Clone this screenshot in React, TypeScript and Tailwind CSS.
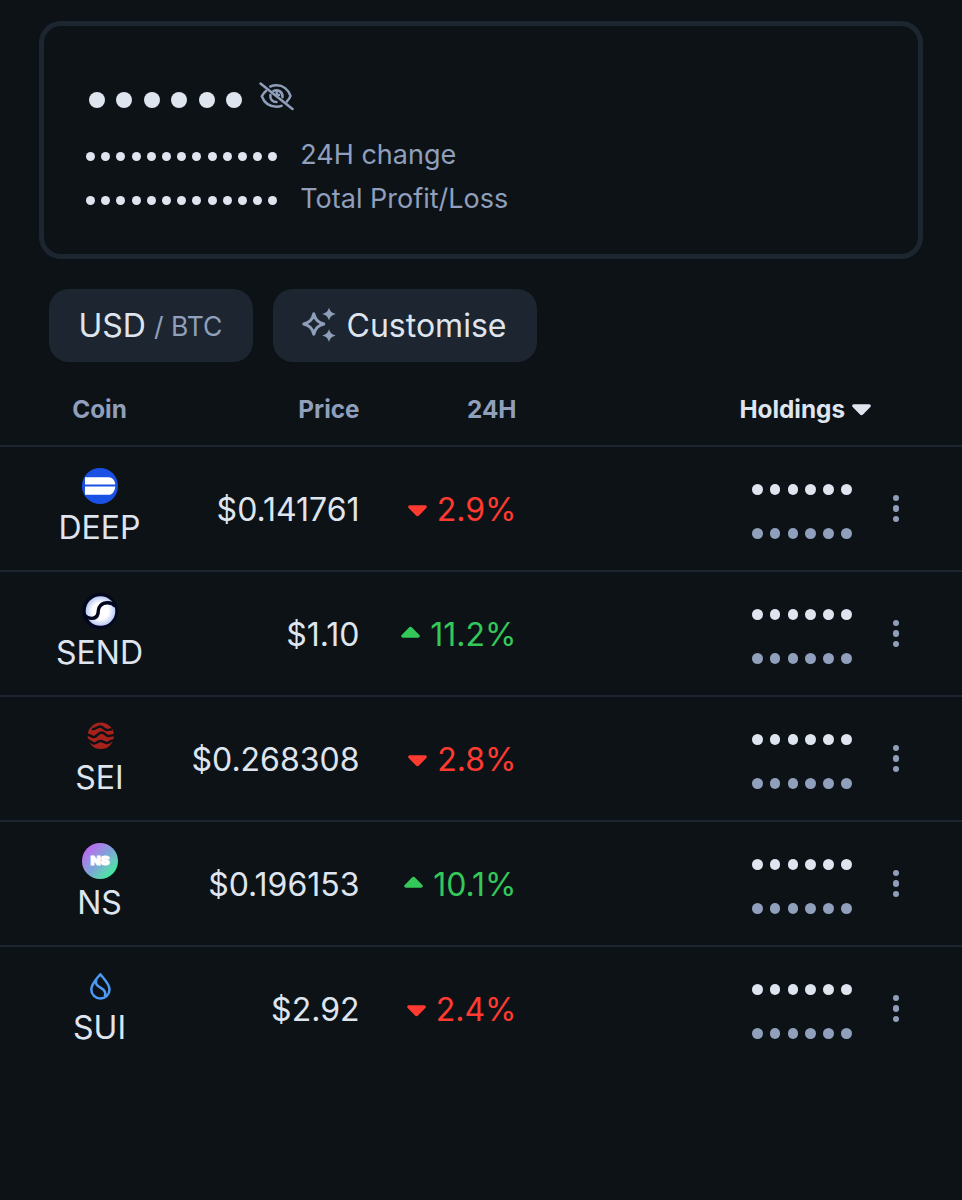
import type { ReactNode } from 'react';
import clsx from 'clsx';

interface Coin {
  symbol: string;
  price: string;
  change: number;
  icon: ReactNode;
}

function DeepIcon() {
  return (
    <svg className="w-9 h-9" viewBox="0 0 36 36">
      <circle cx="18" cy="18" r="18" fill="#1a50e4" />
      <path d="M3 9.3h23.500c4 0 6.200 3 6.800 7.300H3z" fill="#fff" />
      <path d="M3 18.500h30.300c-.6 4.900-2.800 8.300-6.800 8.300H3z" fill="#fff" />
    </svg>
  );
}

function SendIcon() {
  return (
    <svg className="w-9 h-9" viewBox="0 0 36 36">
      <defs>
        <radialGradient id="send-fill" cx="50%" cy="50%" r="55%">
          <stop offset="0.5" stopColor="#ffffff" />
          <stop offset="1" stopColor="#a9bcf5" />
        </radialGradient>
      </defs>
      <circle cx="18" cy="18" r="18" fill="#02071d" />
      <circle cx="18.500" cy="18" r="14.800" fill="url(#send-fill)" />
      <path
        d="M2.500 22C6 26.500 14.500 27 16 20.500C16.600 17.500 15.500 15.500 18.500 12.500C22 9 29.500 8.500 33.500 13.500"
        fill="none"
        stroke="#02071d"
        strokeWidth="3.400"
      />
    </svg>
  );
}

function SeiIcon() {
  return (
    <svg className="w-9 h-9" viewBox="0 0 36 36">
      <circle cx="18.800" cy="17.800" r="13.200" fill="#a8221c" />
      <g fill="none" stroke="#0d1217" strokeWidth="2.500" strokeLinejoin="round">
        <path d="M10 10.800c3.500 1.500 5-2.300 8-2.300s4 3.500 7 3.500c2 0 3-.6 5-.8" />
        <path d="M4 16.700c4-.5 5 2.300 8 2.300s4-4.500 7.500-4.500s4 3.500 7 3.500c2 0 3-1 7-1" />
        <path d="M4 21.500c4 0 5 4 8 4c3 0 3.500-2.500 6.500-2.500s4 2 6.500 2s3.500-3.200 8-2.700" />
      </g>
    </svg>
  );
}

function NsIcon() {
  return (
    <span className="flex w-9 h-9 items-center justify-center rounded-full bg-linear-to-br from-[#b869ee] from-15% via-[#7da3d8] via-50% to-[#3fe89c] to-85%">
      <svg className="w-9 h-9" viewBox="0 0 36 36">
        <text
          x="18"
          y="22.300"
          textAnchor="middle"
          textLength="19"
          lengthAdjust="spacingAndGlyphs"
          fontFamily="Inter, sans-serif"
          fontWeight="900"
          fontSize="12"
          fill="#fff"
          stroke="#fff"
          strokeWidth="0.900"
        >
          NS
        </text>
      </svg>
    </span>
  );
}

function SuiIcon() {
  return (
    <svg className="w-9 h-9" viewBox="0 0 36 36" fill="none" stroke="#4c9af5" strokeWidth="2.500" strokeLinejoin="round">
      <path d="M18.300 6.200c-3.500 4.500-9 9.500-9 15.300a9.100 9.100 0 0 0 18.200 0c0-5.800-5.700-10.800-9.200-15.300z" />
      <path d="M14.300 11.500c-1.500 5 1 6.500 4.500 8.300c4 2 5.500 4.500 4 8.700" />
    </svg>
  );
}

const coins: Coin[] = [
  { symbol: 'DEEP', price: '$0.141761', change: -2.9, icon: <DeepIcon /> },
  { symbol: 'SEND', price: '$1.10', change: 11.2, icon: <SendIcon /> },
  { symbol: 'SEI', price: '$0.268308', change: -2.8, icon: <SeiIcon /> },
  { symbol: 'NS', price: '$0.196153', change: 10.1, icon: <NsIcon /> },
  { symbol: 'SUI', price: '$2.92', change: -2.4, icon: <SuiIcon /> },
];

// Masked value: a row of round dots instead of the number
function Dots({ count, gap, dot }: { count: number; gap: string; dot: string }) {
  return (
    <div className={clsx('flex items-center', gap)}>
      {Array.from({ length: count }, (_, i) => (
        <span key={i} className={clsx('rounded-full', dot)} />
      ))}
    </div>
  );
}

function Caret({ up = false }: { up?: boolean }) {
  return (
    <svg
      className={clsx('w-[19px] h-3 shrink-0', up ? 'mb-1.5 rotate-180' : 'mt-0.5')}
      viewBox="0 0 19 12"
      fill="currentColor"
    >
      <path d="M1.800 0.300h15.400c1.500 0 2.200 1.800 1.100 2.800l-7.300 7.500c-.9.900-2.100.9-3 0L.7 3.100C-.4 2.100.3.300 1.800.300z" />
    </svg>
  );
}

function EyeOffIcon() {
  return (
    <svg className="w-[35px] h-[29px] text-[#8f9fb9]" viewBox="0 0 35 29" fill="none" stroke="currentColor" strokeWidth="2.500" strokeLinecap="round">
      <path d="M7.200 8.700C5 10.500 3.700 12.500 2.800 14.300c2.500 6.700 8.300 10.400 14.800 10.400c1.800 0 3.400-.3 5-.9" />
      <path d="M11.300 4.500c2-.8 4-1.200 6.200-1.200c6.500 0 11.800 4.300 14 10.600c-.8 2.300-2 4-3.700 5.700" />
      <path d="M11.400 13c-.6 4.200 2.200 7 6 7" />
      <path d="M14.500 8.900c4.600-1.900 9.500 1.100 9 6.300" />
      <path d="M17.800 9.500c-.7 2 .3 3.300 2.300 3.600" />
      <path d="M1.500 1.500l32 25.500" />
    </svg>
  );
}

function SparklesIcon() {
  return (
    <svg className="w-[35px] h-[36px] -mt-0.5 text-[#8f9fb9]" viewBox="0 0 35 36" fill="currentColor">
      <path
        d="M12.800 6.800c1.600 6 4 8.500 10 10.200c-6 1.700-8.400 4.200-10 10.200c-1.600-6-4-8.500-10-10.200c6-1.700 8.400-4.200 10-10.200z"
        fill="none"
        stroke="currentColor"
        strokeWidth="3"
        strokeLinejoin="round"
      />
      <path d="M28 .5c1.200 4 2.600 5.300 6.800 6.500c-4.200 1.200-5.600 2.500-6.800 6.500c-1.200-4-2.600-5.300-6.800-6.500c4.200-1.200 5.600-2.500 6.800-6.500z" />
      <path d="M28 22c1.200 4 2.600 5.300 6.800 6.500c-4.200 1.200-5.600 2.500-6.800 6.500c-1.200-4-2.600-5.300-6.800-6.500c4.200-1.200 5.600-2.500 6.800-6.500z" />
    </svg>
  );
}

function CoinRow({ coin }: { coin: Coin }) {
  const up = coin.change > 0;

  return (
    <div className="grid h-[125px] grid-cols-[180px_179.500px_157px_354.500px_91px] border-b-2 border-[#1d2630] text-[32px] last:border-b-0">
      <div className="flex flex-col items-center pt-[21px] pl-[19px]">
        {coin.icon}
        <span className="mt-1 leading-10">{coin.symbol}</span>
      </div>
      <div className="pt-[43px] text-right leading-10">{coin.price}</div>
      <div
        className={clsx(
          'flex h-10 mt-[43px] items-center justify-end gap-2.5',
          up ? 'text-[#34c759]' : 'text-[#ff3a30]'
        )}
      >
        <Caret up={up} />
        <span className="leading-10">{Math.abs(coin.change).toFixed(1)}%</span>
      </div>
      <div className="flex flex-col items-end gap-[33.5px] pt-[37px] pr-[19.5px]">
        <Dots count={6} gap="gap-[7.3px]" dot="w-[10.5px] h-[10.5px] bg-[#dfe5ef]" />
        <Dots count={6} gap="gap-[7.3px]" dot="w-[10.5px] h-[10.5px] bg-[#8f9fbc]" />
      </div>
      <button className="flex flex-col items-center gap-1 pt-[47.500px] pr-[41px]">
        <span className="w-[6.6px] h-[6.6px] rounded-full bg-[#8f9fb9]" />
        <span className="w-[6.6px] h-[6.6px] rounded-full bg-[#8f9fb9]" />
        <span className="w-[6.6px] h-[6.6px] rounded-full bg-[#8f9fb9]" />
      </button>
    </div>
  );
}

export default function App() {
  return (
    <div className="min-h-screen bg-[#0d1217] pt-[21px] font-['Inter',sans-serif] text-[#dfe5ef]">
      {/* Balance card */}
      <div className="mx-[39px] h-[238px] rounded-[22px] border-5 border-[#1d2630] pt-[55px] pl-[42px]">
        <div className="flex h-[30px] items-center gap-[17px] pl-[3px]">
          <div className="pt-2">
            <Dots count={6} gap="gap-[11.4px]" dot="w-4 h-4 bg-[#dfe5ef]" />
          </div>
          <EyeOffIcon />
        </div>
        <div className="mt-[22.500px] flex h-11 items-center gap-[23px]">
          <div className="pt-0.5">
            <Dots count={13} gap="gap-[6.2px]" dot="w-[9px] h-[9px] bg-[#dfe5ef]" />
          </div>
          <span className="text-[27px] text-[#8f9fbc]">24H change</span>
        </div>
        <div className="flex h-11 items-center gap-[23px]">
          <div className="pt-0.5">
            <Dots count={13} gap="gap-[6.2px]" dot="w-[9px] h-[9px] bg-[#dfe5ef]" />
          </div>
          <span className="text-[27px] text-[#8f9fbc]">Total Profit/Loss</span>
        </div>
      </div>

      {/* Actions */}
      <div className="mt-[30px] ml-[49px] flex gap-5">
        <button className="flex h-[73px] w-[204px] items-center justify-center gap-2 rounded-[20px] bg-[#1d2630] pr-px text-[32px] leading-10">
          USD
          <span className="text-[26.500px] text-[#8f9fbc]">/ BTC</span>
        </button>
        <button className="flex h-[73px] w-[264px] items-center justify-center gap-[11px] rounded-[20px] bg-[#1d2630] pr-[3px] text-[32px]">
          <SparklesIcon />
          <span>Customise</span>
        </button>
      </div>

      {/* Holdings table */}
      <div className="grid h-[85px] grid-cols-[180px_179.500px_157px_354.500px_91px] border-b-2 border-[#1d2630] pt-[31px] text-[24.300px] leading-8 font-bold text-[#8f9fbc]">
        <div className="pl-[19px] text-center">Coin</div>
        <div className="text-right">Price</div>
        <div className="text-right">24H</div>
        <div className="flex h-8 items-center justify-end gap-[7px] text-[#dfe5ef]">
          Holdings
          <Caret />
        </div>
      </div>
      <div>
        {coins.map((coin) => (
          <CoinRow key={coin.symbol} coin={coin} />
        ))}
      </div>
    </div>
  );
}
